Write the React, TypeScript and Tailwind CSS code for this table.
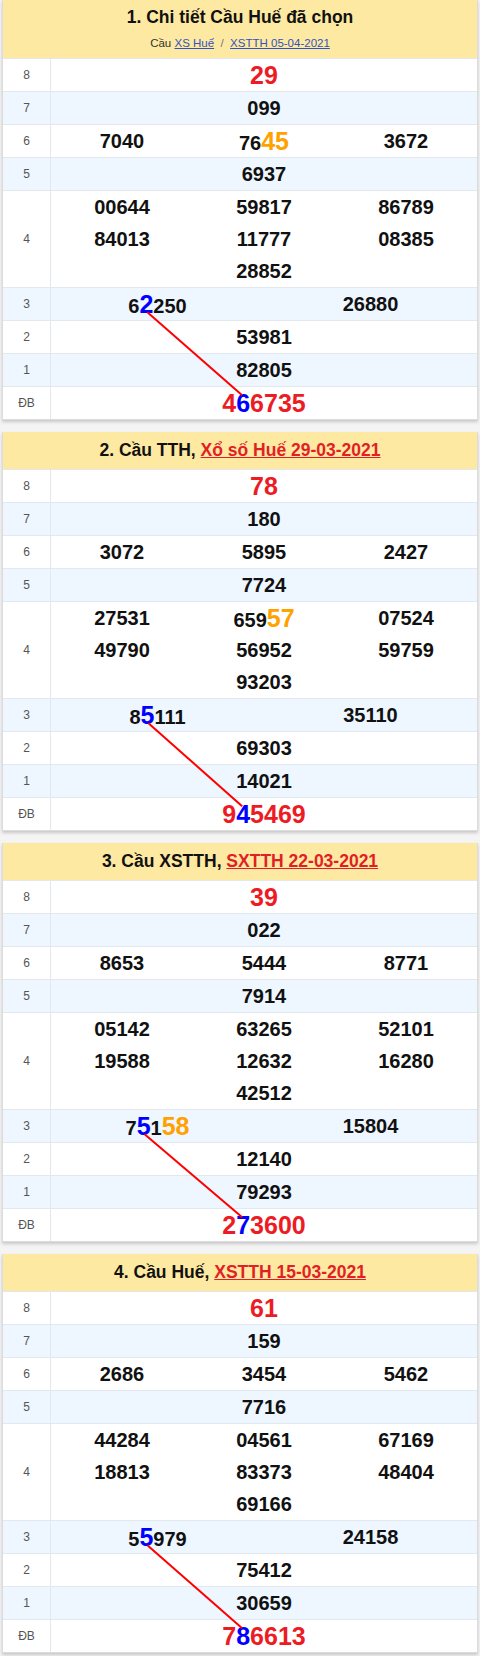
import React, { useLayoutEffect, useRef, useState } from "react";

type Seg = { t: string; c: "n" | "b" | "o" };

function parse(s: string): Seg[] {
  const out: Seg[] = [];
  let mode: "n" | "b" | "o" = "n";
  let buf = "";
  for (const ch of s) {
    if (ch === "[" || ch === "{") {
      if (buf) out.push({ t: buf, c: mode });
      buf = "";
      mode = ch === "[" ? "b" : "o";
    } else if (ch === "]" || ch === "}") {
      if (buf) out.push({ t: buf, c: mode });
      buf = "";
      mode = "n";
    } else buf += ch;
  }
  if (buf) out.push({ t: buf, c: mode });
  return out;
}

type PanelData = {
  title: React.ReactNode;
  big?: boolean;
  g8: string;
  g7: string;
  g6: string[];
  g5: string;
  g4: string[];
  g3: string[];
  g2: string;
  g1: string;
  db: string;
};

const FONT = { fontFamily: '"Liberation Sans", Arial, sans-serif' };

function Num({
  s,
  red,
  blueRef,
}: {
  s: string;
  red?: boolean;
  blueRef?: React.Ref<HTMLSpanElement>;
}) {
  const segs = parse(s);
  return (
    <span
      className={
        red
          ? "text-[25px] font-bold text-[#ed1c24] leading-none"
          : "text-[20px] font-bold text-[#111] leading-none"
      }
    >
      {segs.map((g, i) =>
        g.c === "b" ? (
          <span key={i} ref={blueRef} className="text-[25px] text-[#0000ff]">
            {g.t}
          </span>
        ) : g.c === "o" ? (
          <span key={i} className="text-[25px] text-[#ffa200]">
            {g.t}
          </span>
        ) : (
          <span key={i}>{g.t}</span>
        )
      )}
    </span>
  );
}

function Row({
  label,
  alt,
  children,
}: {
  label: string;
  alt?: boolean;
  children: React.ReactNode;
}) {
  return (
    <div
      className={
        alt
          ? "flex border-t border-[#e3e8ef] bg-[#eef6ff]"
          : "flex border-t border-[#e3e8ef] bg-white"
      }
    >
      <div className="w-[48px] shrink-0 border-r border-[#e3e8ef] flex items-center justify-center text-[12px] text-[#555]">
        {label}
      </div>
      <div className="flex-1 min-w-0">{children}</div>
    </div>
  );
}

function Panel({ d }: { d: PanelData }) {
  const boxRef = useRef<HTMLDivElement>(null);
  const aRef = useRef<HTMLSpanElement>(null);
  const bRef = useRef<HTMLSpanElement>(null);
  const [line, setLine] = useState<null | {
    x1: number;
    y1: number;
    x2: number;
    y2: number;
  }>(null);

  useLayoutEffect(() => {
    const box = boxRef.current;
    const a = aRef.current;
    const b = bRef.current;
    if (!box || !a || !b) return;
    const br = box.getBoundingClientRect();
    const ar = a.getBoundingClientRect();
    const rr = b.getBoundingClientRect();
    const fs = 25;
    const ah = ar.height;
    const bh = rr.height;
    const aBase = ar.top + (ah - 1.117 * fs) / 2 + 0.905 * fs;
    const bBase = rr.top + (bh - 1.117 * fs) / 2 + 0.905 * fs;
    setLine({
      x1: ar.left + ar.width / 2 - br.left,
      y1: aBase - br.top,
      x2: rr.left + rr.width / 2 - br.left - 2,
      y2: bBase - 0.716 * fs + 2 - br.top,
    });
  }, []);

  return (
    <div
      ref={boxRef}
      className="relative bg-white border-x border-b border-[#dcdcdc] shadow-[0_2px_3px_rgba(0,0,0,0.18)]"
    >
      <div
        className={
          d.big
            ? "h-[58px] bg-[#fde9a1] flex flex-col items-center justify-center"
            : "h-[37px] bg-[#fde9a1] flex flex-col items-center justify-center"
        }
      >
        {d.title}
      </div>
      <Row label="8">
        <div className="h-[32px] flex items-center justify-center">
          <Num s={d.g8} red />
        </div>
      </Row>
      <Row label="7" alt>
        <div className="h-[32px] flex items-center justify-center">
          <Num s={d.g7} />
        </div>
      </Row>
      <Row label="6">
        <div className="h-[32px] grid grid-cols-3">
          {d.g6.map((n, i) => (
            <div key={i} className="flex items-center justify-center">
              <Num s={n} />
            </div>
          ))}
        </div>
      </Row>
      <Row label="5" alt>
        <div className="h-[32px] flex items-center justify-center">
          <Num s={d.g5} />
        </div>
      </Row>
      <Row label="4">
        <div className="h-[96px] flex flex-wrap justify-center">
          {d.g4.map((n, i) => (
            <div
              key={i}
              className="w-1/3 h-[32px] flex items-center justify-center"
            >
              <Num s={n} />
            </div>
          ))}
        </div>
      </Row>
      <Row label="3" alt>
        <div className="h-[32px] grid grid-cols-2">
          {d.g3.map((n, i) => (
            <div key={i} className="flex items-center justify-center">
              <Num s={n} blueRef={i === 0 ? aRef : undefined} />
            </div>
          ))}
        </div>
      </Row>
      <Row label="2">
        <div className="h-[32px] flex items-center justify-center">
          <Num s={d.g2} />
        </div>
      </Row>
      <Row label="1" alt>
        <div className="h-[32px] flex items-center justify-center">
          <Num s={d.g1} />
        </div>
      </Row>
      <Row label="ĐB">
        <div className="h-[32px] flex items-center justify-center">
          <Num s={d.db} red blueRef={bRef} />
        </div>
      </Row>
      {line && (
        <svg
          className="absolute inset-0 pointer-events-none"
          width="100%"
          height="100%"
        >
          <line
            x1={line.x1}
            y1={line.y1}
            x2={line.x2}
            y2={line.y2}
            stroke="#ff0000"
            strokeWidth={2}
          />
        </svg>
      )}
    </div>
  );
}

function Title({ pre, link }: { pre: string; link: string }) {
  return (
    <div className="text-[17.5px] font-bold text-[#111] leading-none">
      {pre}
      <a href="#" className="text-[#e21f26] underline">
        {link}
      </a>
    </div>
  );
}

const panels: PanelData[] = [
  {
    big: true,
    title: (
      <>
        <div className="text-[17.5px] font-bold text-[#111] leading-none">
          1. Chi tiết Cầu Huế đã chọn
        </div>
        <div className="mt-[11px] text-[11.5px] text-[#333] leading-none">
          Cầu{" "}
          <a href="#" className="text-[#3153c0] underline">
            XS Huế
          </a>
          <span className="text-[#777]">&nbsp;&nbsp;/&nbsp;&nbsp;</span>
          <a href="#" className="text-[#3153c0] underline">
            XSTTH 05-04-2021
          </a>
        </div>
      </>
    ),
    g8: "29",
    g7: "099",
    g6: ["7040", "76{45}", "3672"],
    g5: "6937",
    g4: ["00644", "59817", "86789", "84013", "11777", "08385", "28852"],
    g3: ["6[2]250", "26880"],
    g2: "53981",
    g1: "82805",
    db: "4[6]6735",
  },
  {
    title: <Title pre="2. Cầu TTH, " link="Xổ số Huế 29-03-2021" />,
    g8: "78",
    g7: "180",
    g6: ["3072", "5895", "2427"],
    g5: "7724",
    g4: ["27531", "659{57}", "07524", "49790", "56952", "59759", "93203"],
    g3: ["8[5]111", "35110"],
    g2: "69303",
    g1: "14021",
    db: "9[4]5469",
  },
  {
    title: <Title pre="3. Cầu XSTTH, " link="SXTTH 22-03-2021" />,
    g8: "39",
    g7: "022",
    g6: ["8653", "5444", "8771"],
    g5: "7914",
    g4: ["05142", "63265", "52101", "19588", "12632", "16280", "42512"],
    g3: ["7[5]1{58}", "15804"],
    g2: "12140",
    g1: "79293",
    db: "2[7]3600",
  },
  {
    title: <Title pre="4. Cầu Huế, " link="XSTTH 15-03-2021" />,
    g8: "61",
    g7: "159",
    g6: ["2686", "3454", "5462"],
    g5: "7716",
    g4: ["44284", "04561", "67169", "18813", "83373", "48404", "69166"],
    g3: ["5[5]979", "24158"],
    g2: "75412",
    g1: "30659",
    db: "7[8]6613",
  },
];

export default function App() {
  return (
    <div
      style={FONT}
      className="min-h-[1656px] bg-[#f4f4f4] px-[2px] pb-[4px] flex flex-col gap-[12px]"
    >
      {panels.map((p, i) => (
        <Panel key={i} d={p} />
      ))}
    </div>
  );
}
